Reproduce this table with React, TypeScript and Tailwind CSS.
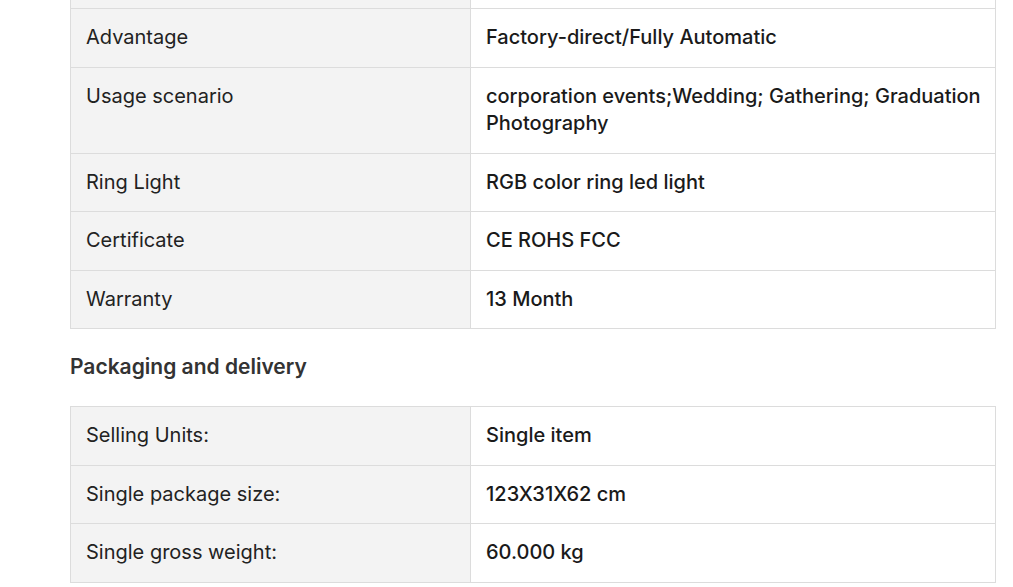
import React from "react";

const spec: [string, string][] = [
  ["Advantage", "Factory-direct/Fully Automatic"],
  ["Usage scenario", "corporation events;Wedding; Gathering; Graduation Photography"],
  ["Ring Light", "RGB color ring led light"],
  ["Certificate", "CE ROHS FCC"],
  ["Warranty", "13 Month"],
];

const pack: [string, string][] = [
  ["Selling Units:", "Single item"],
  ["Single package size:", "123X31X62 cm"],
  ["Single gross weight:", "60.000 kg"],
];

function Row({ k, v }: { k: string; v: string }) {
  return (
    <div className="grid grid-cols-[400px_1fr] border-b border-[#dcdcdc]">
      <div className="bg-[#f3f3f3] border-r border-[#dcdcdc] pl-[15px] pr-[15px] pt-[15px] pb-[15px]">{k}</div>
      <div className="bg-white pl-[15px] pr-[10px] pt-[15px] pb-[15px] font-medium text-[#1a1a1a]">{v}</div>
    </div>
  );
}

export default function App() {
  return (
    <div
      className="w-[1013px] h-[587px] overflow-hidden bg-white text-[#222222] text-[20px] leading-[27.5px]"
      style={{ fontFamily: "Inter, 'Noto Sans', sans-serif" }}
    >
      <div className="ml-[70px] w-[926px]">
        <div className="border-l border-r border-[#dcdcdc]">
          <div className="grid grid-cols-[400px_1fr] border-b border-[#dcdcdc] h-[9px]">
            <div className="bg-[#f3f3f3] border-r border-[#dcdcdc]" />
            <div className="bg-white" />
          </div>
          {spec.map(([k, v]) => (
            <Row key={k} k={k} v={v} />
          ))}
        </div>
        <div className="pt-[24px] pb-[25px] text-[21px] leading-[28px] font-semibold text-[#333333]">
          Packaging and delivery
        </div>
        <div className="border-l border-r border-t border-[#dcdcdc]">
          {pack.map(([k, v]) => (
            <Row key={k} k={k} v={v} />
          ))}
        </div>
      </div>
    </div>
  );
}
